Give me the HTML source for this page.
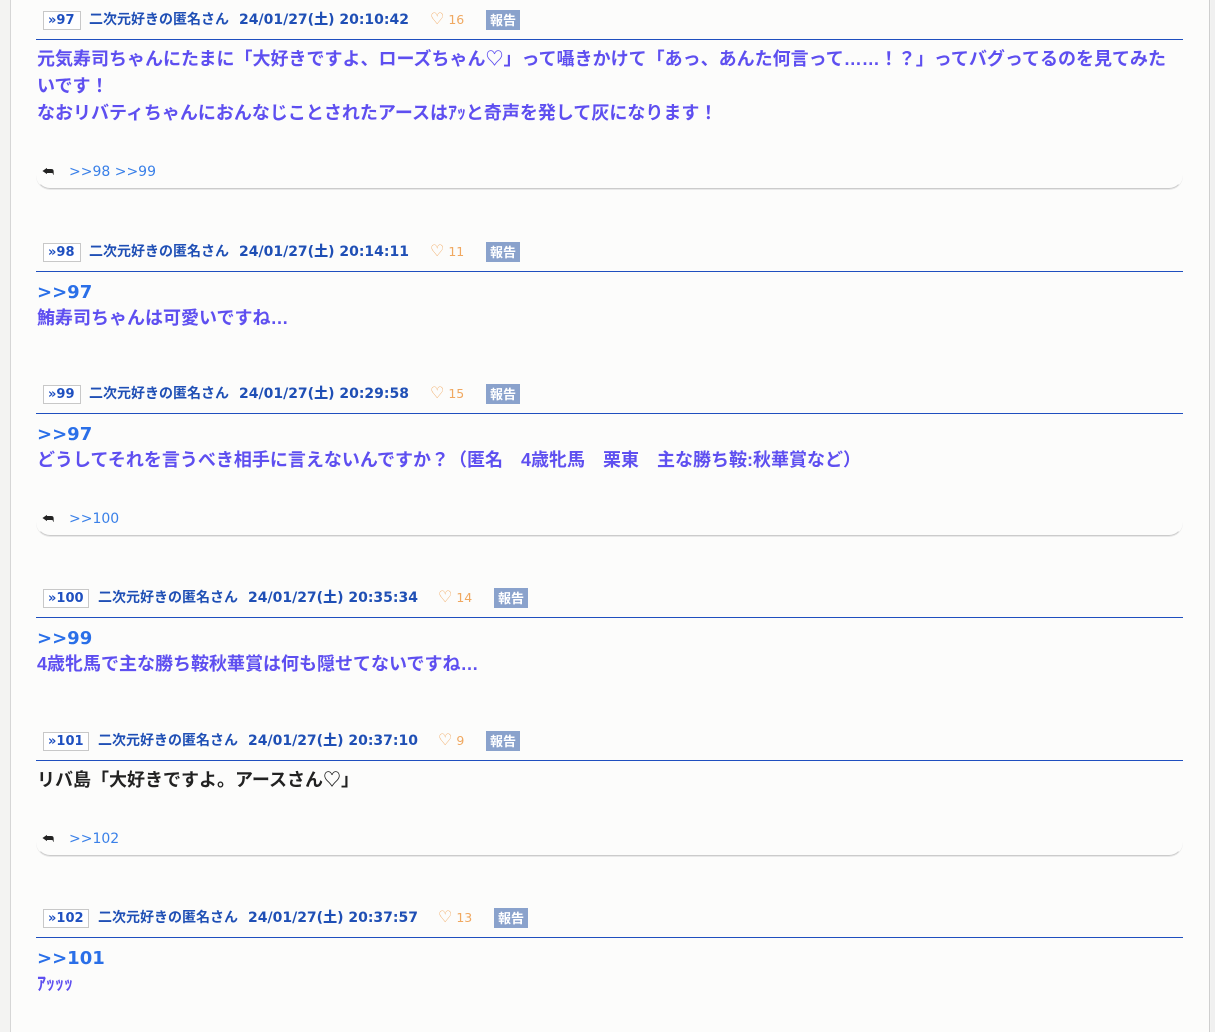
<!DOCTYPE html>
<html><head><meta charset="utf-8"><style>
*{margin:0;padding:0;box-sizing:border-box}
body{width:1215px;height:1032px;background:#f3f3f2;position:relative;overflow:hidden;font-family:"Liberation Sans","Noto Sans CJK JP",sans-serif}
#panel{position:absolute;left:10px;top:0;width:1200px;height:1032px;background:#fcfcfb;border-left:1px solid #d6d6d6;border-right:1px solid #cfcfcf}
#side{position:absolute;left:1211px;top:0;width:4px;height:1032px;background:#f0f0f0}
.a{position:absolute;white-space:nowrap}
.num{position:absolute;height:19px;border:1px solid #c8c8c8;background:#fff;color:#1f50c0;font-weight:bold;font-size:13px;line-height:17px;padding-left:4px;font-family:"DejaVu Sans","Noto Sans CJK JP",sans-serif}
.nm{color:#1f4fb5;font-weight:bold;font-size:14px;line-height:20px;font-family:"DejaVu Sans","Noto Sans CJK JP",sans-serif}
.nm b{display:inline-block;margin-left:10px}
.ht{color:#f0a860;font-size:12.5px;line-height:20px;font-family:"DejaVu Sans",sans-serif}
.ht span{font-size:16px}
.rp{position:absolute;width:34px;height:20px;background:#8aa2cc;color:#fff;font-weight:bold;font-size:13px;line-height:20px;text-align:center;font-family:"Noto Sans CJK JP",sans-serif}
.ln{position:absolute;left:36px;width:1147px;height:1px;background:#1f4fbf}
.bd{color:#5e4ff0;font-weight:bold;font-size:18px;line-height:27px}
.anc{color:#2a6fe8;font-weight:bold;font-size:18px;line-height:27px;font-family:"DejaVu Sans",sans-serif}
.blk{color:#222;font-weight:bold;font-size:18px;line-height:27px}
.rb{position:absolute;left:36px;width:1147px;height:30px;border-bottom:1px solid #cbcbcb;border-left:1px solid transparent;border-right:1px solid transparent;border-radius:0 0 14px 14px;box-shadow:0 1px 0 #e8e8e8}
.rl{position:absolute;color:#3a80e8;font-size:14px;line-height:18px;white-space:nowrap;font-family:"DejaVu Sans",sans-serif}
.ic{position:absolute;font-size:13px;color:#222}
</style></head><body>
<div id="panel"></div><div id="side"></div>

<div class="num" style="left:43px;top:11px;width:38px">»97</div>
<div class="a nm" style="left:89px;top:10px">二次元好きの匿名さん<b>24/01/27(土) 20:10:42</b></div>
<div class="a ht" style="left:430px;top:9px"><span>♡</span> 16</div>
<div class="rp" style="left:486px;top:10px">報告</div>
<div class="ln" style="top:39px"></div>
<div class="a bd" style="left:37px;top:46px">元気寿司ちゃんにたまに「大好きですよ、ローズちゃん♡」って囁きかけて「あっ、あんた何言って……！？」ってバグってるのを見てみた<br>いです！<br>なおリバティちゃんにおんなじことされたアースはｱｯと奇声を発して灰になります！</div>
<div class="rb" style="top:159px"></div>
<div class="ic" style="left:42px;top:164px">⮪</div>
<div class="rl" style="left:69px;top:163px">&gt;&gt;98 &gt;&gt;99</div>

<div class="num" style="left:43px;top:243px;width:38px">»98</div>
<div class="a nm" style="left:89px;top:242px">二次元好きの匿名さん<b>24/01/27(土) 20:14:11</b></div>
<div class="a ht" style="left:430px;top:241px"><span>♡</span> 11</div>
<div class="rp" style="left:486px;top:242px">報告</div>
<div class="ln" style="top:271px"></div>
<div class="a anc" style="left:37px;top:279px">&gt;&gt;97</div>
<div class="a bd" style="left:37px;top:305px">鮪寿司ちゃんは可愛いですね…</div>

<div class="num" style="left:43px;top:385px;width:38px">»99</div>
<div class="a nm" style="left:89px;top:384px">二次元好きの匿名さん<b>24/01/27(土) 20:29:58</b></div>
<div class="a ht" style="left:430px;top:383px"><span>♡</span> 15</div>
<div class="rp" style="left:486px;top:384px">報告</div>
<div class="ln" style="top:413px"></div>
<div class="a anc" style="left:37px;top:421px">&gt;&gt;97</div>
<div class="a bd" style="left:37px;top:447px">どうしてそれを言うべき相手に言えないんですか？（匿名　4歳牝馬　栗東　主な勝ち鞍:秋華賞など）</div>
<div class="rb" style="top:506px"></div>
<div class="ic" style="left:42px;top:511px">⮪</div>
<div class="rl" style="left:69px;top:510px">&gt;&gt;100</div>

<div class="num" style="left:43px;top:589px;width:46px">»100</div>
<div class="a nm" style="left:98px;top:588px">二次元好きの匿名さん<b>24/01/27(土) 20:35:34</b></div>
<div class="a ht" style="left:438px;top:587px"><span>♡</span> 14</div>
<div class="rp" style="left:494px;top:588px">報告</div>
<div class="ln" style="top:617px"></div>
<div class="a anc" style="left:37px;top:625px">&gt;&gt;99</div>
<div class="a bd" style="left:37px;top:651px">4歳牝馬で主な勝ち鞍秋華賞は何も隠せてないですね…</div>

<div class="num" style="left:43px;top:732px;width:46px">»101</div>
<div class="a nm" style="left:98px;top:731px">二次元好きの匿名さん<b>24/01/27(土) 20:37:10</b></div>
<div class="a ht" style="left:438px;top:730px"><span>♡</span> 9</div>
<div class="rp" style="left:486px;top:731px">報告</div>
<div class="ln" style="top:760px"></div>
<div class="a blk" style="left:37px;top:767px">リバ島「大好きですよ。アースさん♡」</div>
<div class="rb" style="top:826px"></div>
<div class="ic" style="left:42px;top:831px">⮪</div>
<div class="rl" style="left:69px;top:830px">&gt;&gt;102</div>

<div class="num" style="left:43px;top:909px;width:46px">»102</div>
<div class="a nm" style="left:98px;top:908px">二次元好きの匿名さん<b>24/01/27(土) 20:37:57</b></div>
<div class="a ht" style="left:438px;top:907px"><span>♡</span> 13</div>
<div class="rp" style="left:494px;top:908px">報告</div>
<div class="ln" style="top:937px"></div>
<div class="a anc" style="left:37px;top:945px">&gt;&gt;101</div>
<div class="a bd" style="left:37px;top:971px">ｱｯｯｯ</div>
</body></html>
